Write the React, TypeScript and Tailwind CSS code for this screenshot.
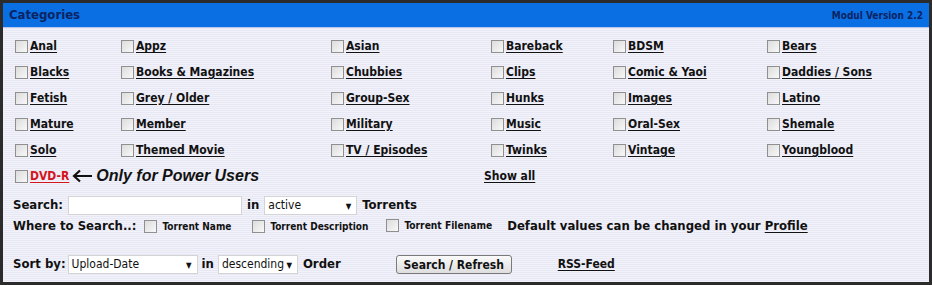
import React from 'react';

// Category filter panel of the torrent browser
const rows: string[][] = [
  ['Anal', 'Appz', 'Asian', 'Bareback', 'BDSM', 'Bears'],
  ['Blacks', 'Books & Magazines', 'Chubbies', 'Clips', 'Comic & Yaoi', 'Daddies / Sons'],
  ['Fetish', 'Grey / Older', 'Group-Sex', 'Hunks', 'Images', 'Latino'],
  ['Mature', 'Member', 'Military', 'Music', 'Oral-Sex', 'Shemale'],
  ['Solo', 'Themed Movie', 'TV / Episodes', 'Twinks', 'Vintage', 'Youngblood'],
];

const font = "font-['DejaVu_Sans_Condensed','DejaVu_Sans',sans-serif]";

function Box() {
  return (
    <span className="inline-block h-[13px] w-[13px] shrink-0 border border-[#8f8f8f] bg-[linear-gradient(135deg,#dcdcdc,#f8f8f8)]" />
  );
}

function Select({ value, w }: { value: string; w: string }) {
  return (
    <span
      className={`flex h-[19px] items-center justify-between border border-[#d4d4d4] bg-white pl-[3px] pr-[5px] text-[12px] font-normal text-[#111] ${w}`}
    >
      <span>{value}</span>
      <span className="mt-[3px] text-[8px] leading-none">▼</span>
    </span>
  );
}

export default function App() {
  return (
    <div className={`${font} h-[285px] w-[932px] bg-[#2b2b2b] p-[3px] text-[#111]`}>
      <div className="flex h-full flex-col bg-[repeating-linear-gradient(180deg,#f2f2fa_0px,#f2f2fa_1px,#e8e8f4_1px,#e8e8f4_2px)]">
        {/* header */}
        <div className="flex h-[25px] items-center justify-between border-b border-[#b9c9ee] bg-[#0a6fe3] pl-[6px] pr-[6px]">
          <span className="text-[13px] font-bold text-[#0b2463]">Categories</span>
          <span className="text-[10px] font-bold text-[#0b2463]">Modul Version 2.2</span>
        </div>

        {/* categories */}
        <div className="grid grid-cols-[106px_210px_160px_122px_154px_1fr] pl-[12px] pt-[5px] text-[12px] font-bold">
          {rows.flat().map((c) => (
            <div key={c} className="flex h-[26px] items-center gap-[2px]">
              <Box />
              <span className="underline underline-offset-[2px]">{c}</span>
            </div>
          ))}
          <div className="col-span-3 flex h-[26px] items-center gap-[2px]">
            <Box />
            <span className="text-[#d4141c] underline underline-offset-[2px]">DVD-R</span>
            <span className="flex items-center font-['Liberation_Sans',sans-serif] text-[16px] italic">
              <svg width="21" height="14" viewBox="0 0 21 14" className="ml-[1px]">
                <path d="M20 7H2M8 1.5L2 7l6 5.5" fill="none" stroke="#111" strokeWidth="2.2" />
              </svg>
              <span className="ml-[3px]">Only for Power Users</span>
            </span>
          </div>
          <div className="-ml-[7px] flex h-[26px] items-center">
            <span className="underline underline-offset-[2px]">Show all</span>
          </div>
        </div>

        {/* search */}
        <div className="mt-[6px] flex h-[20px] items-center pl-[10px] text-[13px] font-bold">
          <span>Search:</span>
          <span className="ml-[5px] h-[19px] w-[174px] border border-[#d4d4d4] bg-white" />
          <span className="ml-[5px]">in</span>
          <Select value="active" w="ml-[5px] w-[93px]" />
          <span className="ml-[5px]">Torrents</span>
        </div>
        <div className="flex h-[22px] items-center pl-[10px] text-[13px] font-bold">
          <span>Where to Search..:</span>
          <span className="ml-[8px] flex items-center">
            <Box />
            <span className="ml-[5px] text-[10px]">Torrent Name</span>
          </span>
          <span className="ml-[21px] flex items-center">
            <Box />
            <span className="ml-[5px] text-[10px]">Torrent Description</span>
          </span>
          <span className="ml-[18px] flex items-center">
            <Box />
            <span className="ml-[5px] text-[10.2px]">Torrent Filename</span>
          </span>
          <span className="ml-[15px]">
            Default values can be changed in your{' '}
            <span className="underline underline-offset-[2px]">Profile</span>
          </span>
        </div>

        <div className="mt-[17px] flex h-[20px] items-center pl-[10px] text-[13px] font-bold">
          <span>Sort by:</span>
          <Select value="Upload-Date" w="ml-[2px] w-[130px]" />
          <span className="ml-[4px]">in</span>
          <Select value="descending" w="ml-[4px] w-[80px]" />
          <span className="ml-[5px]">Order</span>
          <button className="ml-[55px] h-[19px] w-[116px] rounded-[3px] border border-[#7a7a7a] bg-[linear-gradient(180deg,#fafafa,#dedede)] text-[12px] font-bold text-[#111]">
            Search / Refresh
          </button>
          <span className="ml-[46px] text-[12px] underline underline-offset-[2px]">RSS-Feed</span>
        </div>
      </div>
    </div>
  );
}
